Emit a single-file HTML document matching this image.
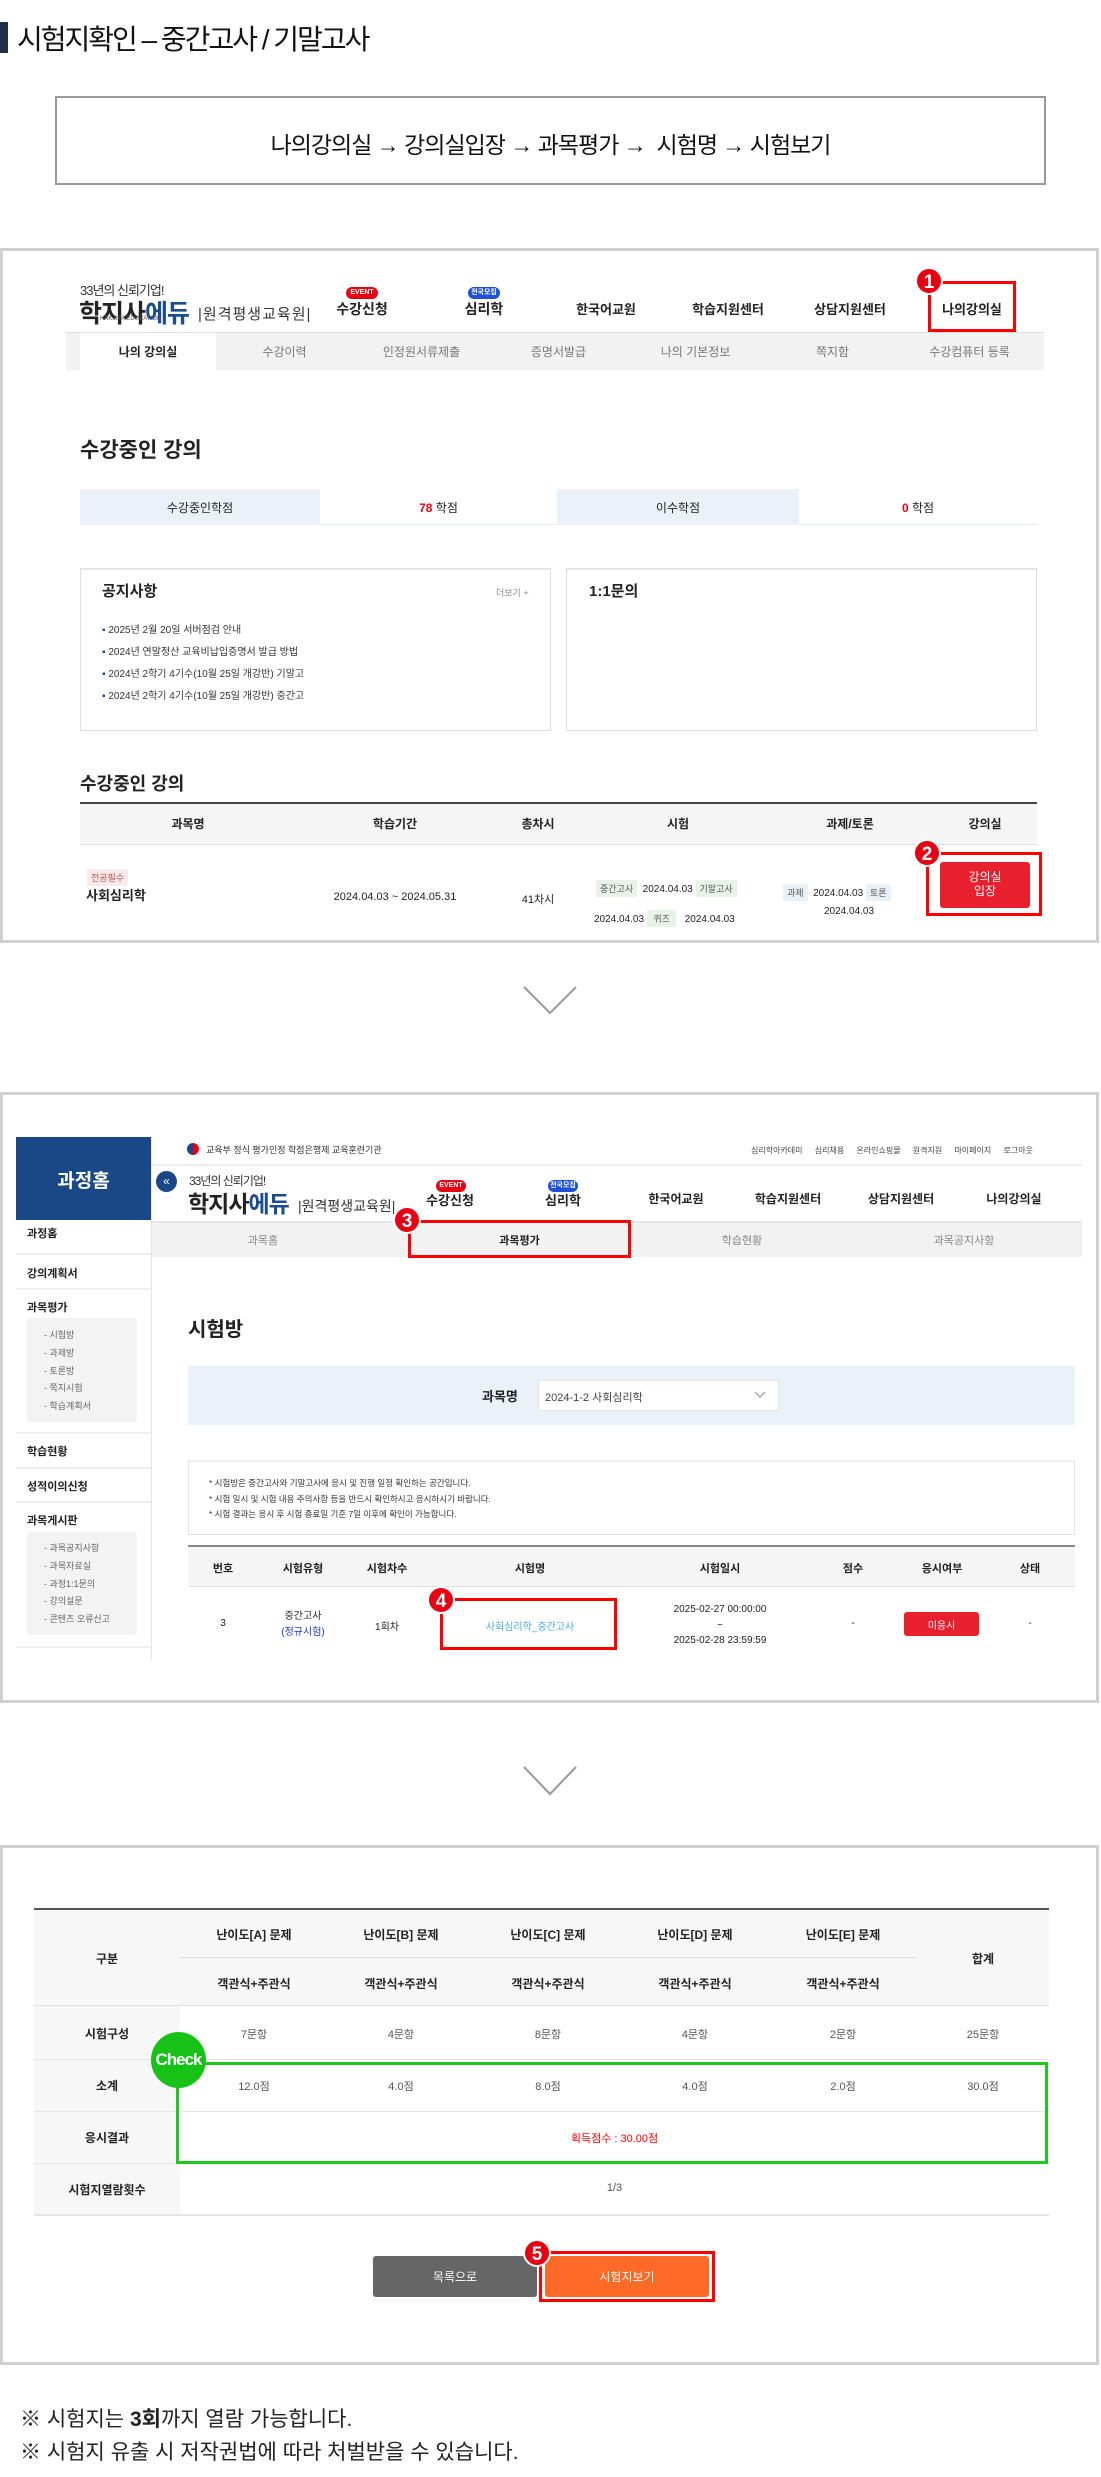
<!DOCTYPE html>
<html><head><meta charset="utf-8"><style>
*{margin:0;padding:0;box-sizing:border-box}
body{width:1101px;height:2477px;position:relative;background:#fff;font-family:"Liberation Sans","Noto Sans CJK KR",sans-serif;color:#222;overflow:hidden}
.a{position:absolute}
.c{position:absolute;text-align:center;white-space:nowrap}
.frame{position:absolute;left:0;width:1099px;border:3px solid #cfcfcf;background:#fff}
.num{position:absolute;width:28px;height:28px;border-radius:50%;background:#e60012;color:#fff;font-weight:bold;font-size:19px;text-align:center;line-height:28px;border:2px solid #fff}
.rbox{position:absolute;border:3px solid #f00}
.badge{position:absolute;height:12px;border-radius:6px;color:#fff;font-size:7px;line-height:12px;text-align:center;font-weight:bold}
.tag{display:inline-block;padding:2px 4px;font-size:9px;color:#555;background:#e8f3e8}
</style></head><body>

<!-- Title -->
<div class="a" style="left:0;top:22px;width:8px;height:31px;background:#1f2e4a"></div>
<div class="a" style="left:17px;top:18px;font-size:28px;color:#111;letter-spacing:-2px">시험지확인 – 중간고사 / 기말고사</div>
<div class="a" style="left:55px;top:96px;width:991px;height:89px;border:2px solid #999"></div>
<div class="c" style="left:55px;width:991px;top:126px;font-size:23px;color:#111;letter-spacing:-1px">나의강의실 → 강의실입장 → 과목평가 → &nbsp;시험명 → 시험보기</div>

<!-- Screenshot 1 -->
<div class="frame" style="top:248px;height:695px"></div>
<div class="a" style="left:80px;top:280px;font-size:13px;color:#333;letter-spacing:-1px">33년의 신뢰기업!</div>
<div class="a" style="left:79px;top:294px;font-size:25px;font-weight:bold;color:#222;letter-spacing:-1px">학지사<span style="color:#1a4d8f">에듀</span></div>
<div class="a" style="left:100px;top:316px;font-size:6px;color:#555">HAKJISA EDUCATION</div>
<div class="a" style="left:198px;top:303px;font-size:15px;color:#333;letter-spacing:1px">|원격평생교육원|</div>
<div class="badge" style="left:346px;top:287px;width:32px;background:#e60012">EVENT</div>
<div class="badge" style="left:468px;top:287px;width:32px;background:#1e50d8">전국모집</div>
<div class="c" style="left:322px;width:80px;top:299px;font-size:14px;font-weight:bold">수강신청</div>
<div class="c" style="left:444px;width:80px;top:299px;font-size:14px;font-weight:bold">심리학</div>
<div class="c" style="left:566px;width:80px;top:299px;font-size:13px;font-weight:bold">한국어교원</div>
<div class="c" style="left:688px;width:80px;top:299px;font-size:13px;font-weight:bold">학습지원센터</div>
<div class="c" style="left:810px;width:80px;top:299px;font-size:13px;font-weight:bold">상담지원센터</div>
<div class="c" style="left:932px;width:80px;top:299px;font-size:13px;font-weight:bold">나의강의실</div>
<div class="rbox" style="left:928px;top:281px;width:88px;height:51px"></div>
<div class="num" style="left:915px;top:267px">1</div>
<div class="a" style="left:66px;top:332px;width:978px;height:38px;background:#f2f2f2;border-top:1px solid #ddd"></div>
<div class="a" style="left:80px;top:333px;width:136px;height:37px;background:#fff"></div>
<div class="c" style="left:80px;width:136px;top:343px;font-size:12px;font-weight:bold">나의 강의실</div>
<div class="c" style="left:216px;width:137px;top:343px;font-size:12px;color:#777">수강이력</div>
<div class="c" style="left:353px;width:137px;top:343px;font-size:12px;color:#777">인정원서류제출</div>
<div class="c" style="left:490px;width:137px;top:343px;font-size:12px;color:#777">증명서발급</div>
<div class="c" style="left:627px;width:137px;top:343px;font-size:12px;color:#777">나의 기본정보</div>
<div class="c" style="left:764px;width:137px;top:343px;font-size:12px;color:#777">쪽지함</div>
<div class="c" style="left:901px;width:137px;top:343px;font-size:12px;color:#777">수강컴퓨터 등록</div>

<div class="a" style="left:80px;top:434px;font-size:21px;font-weight:bold;color:#222">수강중인 강의</div>
<div class="a" style="left:80px;top:489px;width:957px;height:36px;border-bottom:1px solid #e6ecf3"></div>
<div class="a" style="left:80px;top:489px;width:240px;height:36px;background:#eaf1f9"></div>
<div class="a" style="left:557px;top:489px;width:242px;height:36px;background:#eaf1f9"></div>
<div class="c" style="left:80px;width:240px;top:499px;font-size:12px">수강중인학점</div>
<div class="c" style="left:320px;width:237px;top:499px;font-size:12px"><span style="color:#e60012;font-weight:bold">78</span> 학점</div>
<div class="c" style="left:557px;width:242px;top:499px;font-size:12px">이수학점</div>
<div class="c" style="left:799px;width:238px;top:499px;font-size:12px"><span style="color:#e60012;font-weight:bold">0</span> 학점</div>

<div class="a" style="left:80px;top:568px;width:471px;height:163px;border:1px solid #ddd;border-top:2px solid #e6e6e6"></div>
<div class="a" style="left:566px;top:568px;width:471px;height:163px;border:1px solid #ddd;border-top:2px solid #e6e6e6"></div>
<div class="a" style="left:102px;top:580px;font-size:15px;font-weight:bold">공지사항</div>
<div class="a" style="left:496px;top:586px;font-size:9px;color:#888">더보기 +</div>
<div class="a" style="left:589px;top:580px;font-size:15px;font-weight:bold">1:1문의</div>
<div class="a" style="left:102px;top:620px;font-size:10px;color:#333;line-height:22px"><span style="color:#1a4d8f">▪</span> 2025년 2월 20일 서버점검 안내<br><span style="color:#1a4d8f">▪</span> 2024년 연말정산 교육비납입증명서 발급 방법<br><span style="color:#1a4d8f">▪</span> 2024년 2학기 4기수(10월 25일 개강반) 기말고<br><span style="color:#1a4d8f">▪</span> 2024년 2학기 4기수(10월 25일 개강반) 중간고</div>

<div class="a" style="left:80px;top:770px;font-size:18px;font-weight:bold">수강중인 강의</div>
<div class="a" style="left:80px;top:802px;width:957px;height:43px;background:#f5f5f5;border-top:2px solid #444;border-bottom:1px solid #ddd"></div>
<div class="c" style="left:128px;width:120px;top:815px;font-size:12px;font-weight:bold">과목명</div>
<div class="c" style="left:335px;width:120px;top:815px;font-size:12px;font-weight:bold">학습기간</div>
<div class="c" style="left:478px;width:120px;top:815px;font-size:12px;font-weight:bold">총차시</div>
<div class="c" style="left:618px;width:120px;top:815px;font-size:12px;font-weight:bold">시험</div>
<div class="c" style="left:790px;width:120px;top:815px;font-size:12px;font-weight:bold">과제/토론</div>
<div class="c" style="left:925px;width:120px;top:815px;font-size:12px;font-weight:bold">강의실</div>
<div class="a" style="left:87px;top:869px;padding:2px 4px;font-size:9px;color:#b55;background:#fbeaea">전공필수</div>
<div class="a" style="left:86px;top:885px;font-size:13px;font-weight:bold">사회심리학</div>
<div class="c" style="left:315px;width:160px;top:891px;font-size:11px">2024.04.03 ~ 2024.05.31</div>
<div class="c" style="left:508px;width:60px;top:891px;font-size:11px">41차시</div>
<div class="a" style="left:596px;top:880px;font-size:10px;white-space:nowrap"><span class="tag">중간고사</span> &nbsp;2024.04.03 <span class="tag">기말고사</span></div>
<div class="a" style="left:594px;top:910px;font-size:10px;white-space:nowrap">2024.04.03 <span class="tag">&nbsp;퀴즈&nbsp;</span> &nbsp;&nbsp;2024.04.03</div>
<div class="a" style="left:783px;top:884px;font-size:10px;white-space:nowrap"><span class="tag" style="background:#e8f0f8">과제</span> &nbsp;2024.04.03 <span class="tag" style="background:#e8f0f8">토론</span></div>
<div class="a" style="left:824px;top:906px;font-size:10px">2024.04.03</div>
<div class="a" style="left:940px;top:862px;width:90px;height:46px;background:#e8202e;border-radius:3px"></div>
<div class="c" style="left:940px;width:90px;top:870px;font-size:12px;color:#fff;line-height:14px">강의실<br>입장</div>
<div class="rbox" style="left:926px;top:852px;width:116px;height:64px"></div>
<div class="num" style="left:913px;top:839px">2</div>

<svg class="a" style="left:523px;top:986px" width="54" height="29"><polyline points="1,1 27,27 53,1" fill="none" stroke="#999" stroke-width="2"/></svg>

<!-- Screenshot 2 -->
<div class="frame" style="top:1092px;height:611px"></div>
<div class="a" style="left:16px;top:1137px;width:135px;height:83px;background:#1a4785"></div>
<div class="c" style="left:16px;width:135px;top:1166px;font-size:19px;font-weight:bold;color:#fff">과정홈</div>
<div class="a" style="left:151px;top:1137px;width:1px;height:523px;background:#e5e5e5"></div>
<div class="a" style="left:27px;top:1228px;font-size:11px;font-weight:bold;line-height:12px">과정홈</div>
<div class="a" style="left:16px;top:1253px;width:135px;height:2px;background:#eee"></div>
<div class="a" style="left:27px;top:1265px;font-size:11px;font-weight:bold">강의계획서</div>
<div class="a" style="left:16px;top:1288px;width:135px;height:2px;background:#eee"></div>
<div class="a" style="left:27px;top:1299px;font-size:11px;font-weight:bold">과목평가</div>
<div class="a" style="left:27px;top:1318px;width:110px;height:104px;background:#f3f3f3;border-radius:3px"></div>
<div class="a" style="left:44px;top:1327px;font-size:9px;color:#666;line-height:17.8px">- 시험방<br>- 과제방<br>- 토론방<br>- 쪽지시험<br>- 학습계획서</div>
<div class="a" style="left:16px;top:1432px;width:135px;height:2px;background:#eee"></div>
<div class="a" style="left:27px;top:1443px;font-size:11px;font-weight:bold">학습현황</div>
<div class="a" style="left:16px;top:1467px;width:135px;height:2px;background:#eee"></div>
<div class="a" style="left:27px;top:1478px;font-size:11px;font-weight:bold">성적이의신청</div>
<div class="a" style="left:16px;top:1501px;width:135px;height:2px;background:#eee"></div>
<div class="a" style="left:27px;top:1512px;font-size:11px;font-weight:bold">과목게시판</div>
<div class="a" style="left:27px;top:1532px;width:110px;height:103px;background:#f3f3f3;border-radius:3px"></div>
<div class="a" style="left:44px;top:1540px;font-size:9px;color:#666;line-height:17.8px">- 과목공지사항<br>- 과목자료실<br>- 과정1:1문의<br>- 강의설문<br>- 콘텐츠 오류신고</div>
<div class="a" style="left:16px;top:1646px;width:135px;height:2px;background:#eee"></div>

<div class="a" style="left:187px;top:1143px;width:12px;height:12px;border-radius:50%;background:conic-gradient(#e60012 0 50%,#1a4785 50% 100%)"></div>
<div class="a" style="left:206px;top:1143px;font-size:9px;color:#333">교육부 정식 평가인정 학점은행제 교육훈련기관</div>
<div class="a" style="left:751px;top:1145px;font-size:8px;color:#444;word-spacing:10px;white-space:nowrap">심리학아카데미 심리채용 온라인쇼핑몰 원격지원 마이페이지 로그아웃</div>
<div class="a" style="left:152px;top:1164px;width:930px;height:2px;background:#eee"></div>
<div class="a" style="left:156px;top:1171px;width:21px;height:21px;border-radius:50%;background:#1a4785;color:#fff;font-size:12px;text-align:center;line-height:20px">«</div>
<div class="a" style="left:189px;top:1172px;font-size:12px;color:#333;letter-spacing:-1px">33년의 신뢰기업!</div>
<div class="a" style="left:188px;top:1185px;font-size:23px;font-weight:bold;letter-spacing:-1px">학지사<span style="color:#1a4d8f">에듀</span></div>
<div class="a" style="left:298px;top:1196px;font-size:14px;color:#333">|원격평생교육원|</div>
<div class="badge" style="left:436px;top:1180px;width:30px;background:#e60012">EVENT</div>
<div class="badge" style="left:548px;top:1180px;width:30px;background:#1e50d8">전국모집</div>
<div class="c" style="left:410px;width:80px;top:1190px;font-size:13px;font-weight:bold">수강신청</div>
<div class="c" style="left:523px;width:80px;top:1190px;font-size:13px;font-weight:bold">심리학</div>
<div class="c" style="left:636px;width:80px;top:1190px;font-size:12px;font-weight:bold">한국어교원</div>
<div class="c" style="left:748px;width:80px;top:1190px;font-size:12px;font-weight:bold">학습지원센터</div>
<div class="c" style="left:861px;width:80px;top:1190px;font-size:12px;font-weight:bold">상담지원센터</div>
<div class="c" style="left:974px;width:80px;top:1190px;font-size:12px;font-weight:bold">나의강의실</div>
<div class="a" style="left:152px;top:1221px;width:930px;height:36px;background:#f2f2f2;border-top:2px solid #e6e6e6"></div>
<div class="c" style="left:152px;width:222px;top:1232px;font-size:11px;color:#888">과목홈</div>
<div class="c" style="left:408px;width:223px;top:1232px;font-size:11px;font-weight:bold">과목평가</div>
<div class="c" style="left:631px;width:222px;top:1232px;font-size:11px;color:#888">학습현황</div>
<div class="c" style="left:853px;width:222px;top:1232px;font-size:11px;color:#888">과목공지사항</div>
<div class="rbox" style="left:408px;top:1220px;width:223px;height:38px"></div>
<div class="num" style="left:393px;top:1206px">3</div>

<div class="a" style="left:188px;top:1313px;font-size:20px;font-weight:bold">시험방</div>
<div class="a" style="left:188px;top:1366px;width:887px;height:59px;background:#eaf1f9"></div>
<div class="a" style="left:482px;top:1386px;font-size:13px;font-weight:bold">과목명</div>
<div class="a" style="left:538px;top:1380px;width:241px;height:31px;background:#fff;border:1px solid #e3e3e3"></div>
<div class="a" style="left:545px;top:1389px;font-size:11px;color:#444">2024-1-2 사회심리학</div>
<svg class="a" style="left:754px;top:1391px" width="12" height="8"><polyline points="1,1 6,6 11,1" fill="none" stroke="#999" stroke-width="1.2"/></svg>
<div class="a" style="left:188px;top:1460px;width:887px;height:75px;border:1px solid #e3e3e3;border-top:2px solid #eee"></div>
<div class="a" style="left:209px;top:1476px;font-size:8.5px;color:#333;line-height:15.5px">* 시험방은 중간고사와 기말고사에 응시 및 진행 일정 확인하는 공간입니다.<br>* 시험 일시 및 시험 내용 주의사항 등을 반드시 확인하시고 응시하시기 바랍니다.<br>* 시험 결과는 응시 후 시험 종료일 기준 7일 이후에 확인이 가능합니다.</div>
<div class="a" style="left:188px;top:1545px;width:887px;height:42px;background:#f5f5f5;border-top:2px solid #888;border-bottom:1px solid #ddd"></div>
<div class="c" style="left:193px;width:60px;top:1560px;font-size:11px;font-weight:bold">번호</div>
<div class="c" style="left:263px;width:80px;top:1560px;font-size:11px;font-weight:bold">시험유형</div>
<div class="c" style="left:347px;width:80px;top:1560px;font-size:11px;font-weight:bold">시험차수</div>
<div class="c" style="left:490px;width:80px;top:1560px;font-size:11px;font-weight:bold">시험명</div>
<div class="c" style="left:680px;width:80px;top:1560px;font-size:11px;font-weight:bold">시험일시</div>
<div class="c" style="left:823px;width:60px;top:1560px;font-size:11px;font-weight:bold">점수</div>
<div class="c" style="left:902px;width:80px;top:1560px;font-size:11px;font-weight:bold">응시여부</div>
<div class="c" style="left:1000px;width:60px;top:1560px;font-size:11px;font-weight:bold">상태</div>
<div class="c" style="left:193px;width:60px;top:1618px;font-size:10px">3</div>
<div class="c" style="left:263px;width:80px;top:1609px;font-size:10px;line-height:16px">중간고사<br><span style="color:#1e3cc8">(정규시험)</span></div>
<div class="c" style="left:347px;width:80px;top:1618px;font-size:10px">1회차</div>
<div class="c" style="left:460px;width:140px;top:1618px;font-size:10px;color:#4aa8e0">사회심리학_중간고사</div>
<div class="c" style="left:650px;width:140px;top:1602px;font-size:10px;line-height:15.5px">2025-02-27 00:00:00<br>~<br>2025-02-28 23:59:59</div>
<div class="c" style="left:823px;width:60px;top:1618px;font-size:10px">-</div>
<div class="a" style="left:904px;top:1612px;width:75px;height:24px;background:#e8202e;border-radius:3px"></div>
<div class="c" style="left:904px;width:75px;top:1617px;font-size:10px;color:#fff">미응시</div>
<div class="c" style="left:1000px;width:60px;top:1618px;font-size:10px">-</div>
<div class="rbox" style="left:440px;top:1598px;width:177px;height:52px"></div>
<div class="num" style="left:427px;top:1586px">4</div>

<svg class="a" style="left:523px;top:1766px" width="54" height="30"><polyline points="1,1 27,28 53,1" fill="none" stroke="#999" stroke-width="2"/></svg>

<!-- Screenshot 3 -->
<div class="frame" style="top:1845px;height:520px"></div>
<div class="a" style="left:34px;top:1908px;width:1015px;height:98px;background:#f7f7f7;border-top:2px solid #555;border-bottom:1px solid #e0e0e0"></div>
<div class="a" style="left:180px;top:1957px;width:737px;height:1px;background:#ddd"></div>
<div class="a" style="left:34px;top:2006px;width:146px;height:209px;background:#f7f7f7"></div>
<div class="a" style="left:34px;top:2059px;width:1015px;height:1px;background:#e5e5e5"></div>
<div class="a" style="left:34px;top:2111px;width:1015px;height:1px;background:#e5e5e5"></div>
<div class="a" style="left:34px;top:2163px;width:1015px;height:1px;background:#e5e5e5"></div>
<div class="a" style="left:34px;top:2214px;width:1015px;height:2px;background:#e5e5e5"></div>
<div class="c" style="left:57px;width:100px;top:1950px;font-size:12px;font-weight:bold">구분</div>
<div class="c" style="left:933px;width:100px;top:1950px;font-size:12px;font-weight:bold">합계</div>
<div class="c" style="left:194px;width:120px;top:1926px;font-size:12px;font-weight:bold">난이도[A] 문제</div>
<div class="c" style="left:341px;width:120px;top:1926px;font-size:12px;font-weight:bold">난이도[B] 문제</div>
<div class="c" style="left:488px;width:120px;top:1926px;font-size:12px;font-weight:bold">난이도[C] 문제</div>
<div class="c" style="left:635px;width:120px;top:1926px;font-size:12px;font-weight:bold">난이도[D] 문제</div>
<div class="c" style="left:783px;width:120px;top:1926px;font-size:12px;font-weight:bold">난이도[E] 문제</div>
<div class="c" style="left:194px;width:120px;top:1975px;font-size:12px;font-weight:bold">객관식+주관식</div>
<div class="c" style="left:341px;width:120px;top:1975px;font-size:12px;font-weight:bold">객관식+주관식</div>
<div class="c" style="left:488px;width:120px;top:1975px;font-size:12px;font-weight:bold">객관식+주관식</div>
<div class="c" style="left:635px;width:120px;top:1975px;font-size:12px;font-weight:bold">객관식+주관식</div>
<div class="c" style="left:783px;width:120px;top:1975px;font-size:12px;font-weight:bold">객관식+주관식</div>
<div class="c" style="left:57px;width:100px;top:2025px;font-size:12px;font-weight:bold">시험구성</div>
<div class="c" style="left:57px;width:100px;top:2077px;font-size:12px;font-weight:bold">소계</div>
<div class="c" style="left:57px;width:100px;top:2129px;font-size:12px;font-weight:bold">응시결과</div>
<div class="c" style="left:42px;width:130px;top:2181px;font-size:12px;font-weight:bold">시험지열람횟수</div>
<div class="c" style="left:214px;width:80px;top:2026px;font-size:11px;color:#555">7문항</div>
<div class="c" style="left:361px;width:80px;top:2026px;font-size:11px;color:#555">4문항</div>
<div class="c" style="left:508px;width:80px;top:2026px;font-size:11px;color:#555">8문항</div>
<div class="c" style="left:655px;width:80px;top:2026px;font-size:11px;color:#555">4문항</div>
<div class="c" style="left:803px;width:80px;top:2026px;font-size:11px;color:#555">2문항</div>
<div class="c" style="left:943px;width:80px;top:2026px;font-size:11px;color:#555">25문항</div>
<div class="c" style="left:214px;width:80px;top:2078px;font-size:11px;color:#555">12.0점</div>
<div class="c" style="left:361px;width:80px;top:2078px;font-size:11px;color:#555">4.0점</div>
<div class="c" style="left:508px;width:80px;top:2078px;font-size:11px;color:#555">8.0점</div>
<div class="c" style="left:655px;width:80px;top:2078px;font-size:11px;color:#555">4.0점</div>
<div class="c" style="left:803px;width:80px;top:2078px;font-size:11px;color:#555">2.0점</div>
<div class="c" style="left:943px;width:80px;top:2078px;font-size:11px;color:#555">30.0점</div>
<div class="c" style="left:180px;width:869px;top:2130px;font-size:11px;color:#f00">획득점수 : 30.00점</div>
<div class="c" style="left:180px;width:869px;top:2182px;font-size:11px;color:#555">1/3</div>
<div class="a" style="left:176px;top:2062px;width:872px;height:102px;border:3px solid #1fc81f"></div>
<div class="a" style="left:151px;top:2032px;width:55px;height:56px;border-radius:50%;background:#16c216;color:#fff;font-weight:bold;font-size:17px;text-align:center;line-height:56px;letter-spacing:-1px">Check</div>

<div class="a" style="left:373px;top:2256px;width:164px;height:41px;background:#666;border-radius:3px"></div>
<div class="c" style="left:373px;width:164px;top:2268px;font-size:12px;color:#fff">목록으로</div>
<div class="a" style="left:545px;top:2256px;width:164px;height:41px;background:#ff6a28;border-radius:3px"></div>
<div class="c" style="left:545px;width:164px;top:2268px;font-size:12px;color:#fff">시험지보기</div>
<div class="rbox" style="left:539px;top:2251px;width:176px;height:51px"></div>
<div class="num" style="left:523px;top:2239px">5</div>

<div class="a" style="left:20px;top:2403px;font-size:21px;color:#222;letter-spacing:0">※ 시험지는 <b>3회</b>까지 열람 가능합니다.</div>
<div class="a" style="left:20px;top:2436px;font-size:21px;color:#222;letter-spacing:0">※ 시험지 유출 시 저작권법에 따라 처벌받을 수 있습니다.</div>
</body></html>
